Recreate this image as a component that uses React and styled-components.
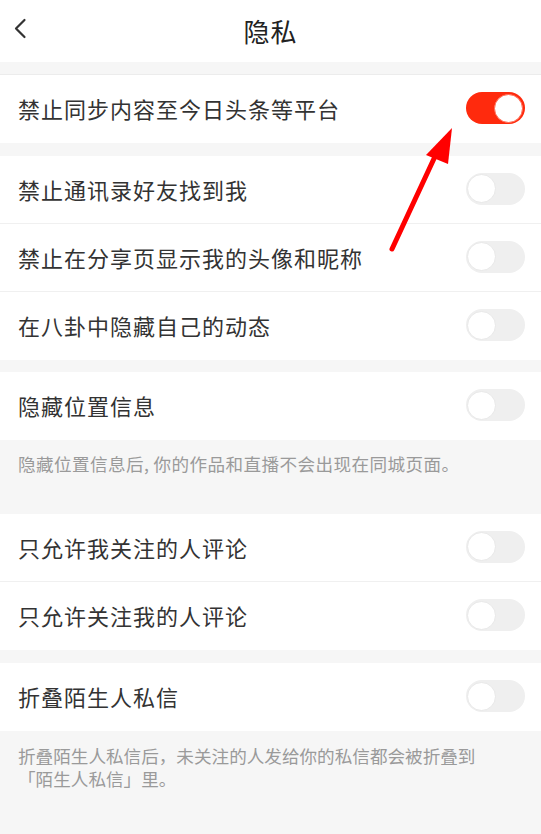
import React, { useState } from 'react'
import styled, { createGlobalStyle } from 'styled-components'

const GlobalStyle = createGlobalStyle`
  html, body {
    margin: 0;
    padding: 0;
    background: #f6f6f6;
  }
  body {
    font-family: "Noto Sans CJK SC", "Noto Sans", sans-serif;
    -webkit-font-smoothing: antialiased;
  }
`

const Page = styled.div`
  position: relative;
  width: 541px;
  min-height: 834px;
  background: #f6f6f6;
  overflow: hidden;
`

const Header = styled.header`
  height: 62px;
  background: #fff;
  display: flex;
  align-items: center;
  justify-content: center;
  position: relative;
`

const BackButton = styled.button`
  position: absolute;
  left: 8px;
  top: 15px;
  width: 24px;
  height: 28px;
  border: 0;
  padding: 0;
  background: none;
  display: flex;
  align-items: center;
  justify-content: center;
`

const Title = styled.h1`
  margin: 0 0 2px;
  font-size: 26px;
  font-weight: 400;
  color: #222;
  letter-spacing: 1px;
`

const Group = styled.section`
  background: #fff;
  margin-top: ${p => p.$gap}px;
  border-top: ${p => (p.$line ? '1px solid #ececec' : 'none')};
`

const Row = styled.div`
  box-sizing: border-box;
  height: 68px;
  padding: 0 16px 2px 18px;
  display: flex;
  align-items: center;
  justify-content: space-between;
  border-bottom: 1px solid #f0f0f0;
  &:last-child {
    border-bottom: 0;
  }
`

const Label = styled.span`
  font-size: 22px;
  letter-spacing: 1px;
  color: #333;
`

const Track = styled.button`
  position: relative;
  width: 59px;
  height: 32px;
  border-radius: 16px;
  border: 0;
  padding: 0;
  cursor: pointer;
  background: ${p => (p.$on ? '#ff2a0d' : '#efefef')};
`

const Knob = styled.span`
  position: absolute;
  top: 1.5px;
  left: ${p => (p.$on ? '28px' : '1px')};
  width: 29px;
  height: 29px;
  border-radius: 50%;
  background: #fff;
  box-sizing: border-box;
  border: 1px solid ${p => (p.$on ? '#ff6a52' : '#e8e8e8')};
`

const Note = styled.div`
  padding: ${p => p.$pad};
  font-size: 17.6px;
  line-height: 23px;
  color: #9a9a9a;
`

const NoteLine = styled.div`
  white-space: nowrap;
  letter-spacing: ${p => p.$spacing || 0}px;
`

const Arrow = styled.svg`
  position: absolute;
  left: 380px;
  top: 120px;
  pointer-events: none;
`

function Switch({ initial }) {
  const [on, setOn] = useState(initial)
  return (
    <Track $on={on} onClick={() => setOn(!on)}>
      <Knob $on={on} />
    </Track>
  )
}

function Setting({ label, on }) {
  return (
    <Row>
      <Label>{label}</Label>
      <Switch initial={!!on} />
    </Row>
  )
}

export default function App() {
  return (
    <Page>
      <GlobalStyle />
      <Header>
        <BackButton>
          <svg width="14" height="22" viewBox="0 0 14 22">
            <path d="M11.5 2 L3 10.5 L11.5 19" fill="none" stroke="#333" strokeWidth="2.2" strokeLinecap="round" strokeLinejoin="round" />
          </svg>
        </BackButton>
        <Title>隐私</Title>
      </Header>

      <Group $gap={12} $line>
        <Setting label="禁止同步内容至今日头条等平台" on />
      </Group>

      <Group $gap={13}>
        <Setting label="禁止通讯录好友找到我" />
        <Setting label="禁止在分享页显示我的头像和昵称" />
        <Setting label="在八卦中隐藏自己的动态" />
      </Group>

      <Group $gap={12}>
        <Setting label="隐藏位置信息" />
      </Group>
      <Note $pad="12px 18px 39px">
        <NoteLine $spacing={0.4}>隐藏位置信息后, 你的作品和直播不会出现在同城页面。</NoteLine>
      </Note>

      <Group $gap={0}>
        <Setting label="只允许我关注的人评论" />
        <Setting label="只允许关注我的人评论" />
      </Group>

      <Group $gap={13}>
        <Setting label="折叠陌生人私信" />
      </Group>
      <Note $pad="13px 18px">
        <NoteLine>折叠陌生人私信后，未关注的人发给你的私信都会被折叠到</NoteLine>
        <NoteLine>「陌生人私信」里。</NoteLine>
      </Note>

      <Arrow width="90" height="140" viewBox="0 0 90 140">
        <line x1="12" y1="129" x2="58" y2="30" stroke="#ff0000" strokeWidth="5" strokeLinecap="round" />
        <polygon points="72,8 46,35 68,44" fill="#ff0000" />
      </Arrow>
    </Page>
  )
}
